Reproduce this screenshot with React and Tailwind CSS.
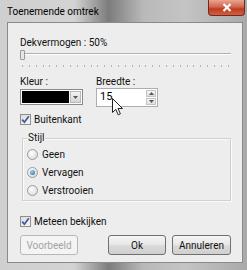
const font = { fontFamily: 'Roboto, "Noto Sans", sans-serif' };

const CheckBox = ({ label }) => (
    <div className="flex items-center gap-[3px] h-[13px]">
        <span className="w-[11px] h-[11px] border border-[#8e8f8f] bg-[linear-gradient(135deg,#dcdcdc,#f6f6f6)] flex items-center justify-center">
            <svg width="9" height="9" viewBox="0 0 9 9">
                <path d="M1.2 4.6 L3.4 7.2 L7.8 1.2" fill="none" stroke="#3a5a9a" strokeWidth="1.7" />
            </svg>
        </span>
        <span className="text-[10px] leading-[13px] text-[#111]">{label}</span>
    </div>
);

const Radio = ({ label, checked }) => (
    <div className="flex items-center gap-[4px] h-[13px] pl-[4px]">
        <span className="w-[11px] h-[11px] rounded-full border border-[#9c9c9c] bg-[radial-gradient(circle_at_40%_35%,#ffffff,#d4d4d4)] flex items-center justify-center">
            {checked && <span className="w-[5px] h-[5px] rounded-full bg-[radial-gradient(circle_at_40%_35%,#9fd3f5,#1b5f97)]" />}
        </span>
        <span className="text-[10px] leading-[13px] text-[#111]">{label}</span>
    </div>
);

const Button = ({ children, disabled, className = '' }) => (
    <div
        className={`h-[20px] w-[58px] rounded-[3px] border flex items-center justify-center text-[10px] ${
            disabled
                ? 'border-[#b5b9bc] bg-[#f4f4f4] text-[#a3a3a3]'
                : 'border-[#707070] bg-[linear-gradient(180deg,#f4f4f4_0%,#e8e8e8_48%,#dbdbdb_52%,#cfcfcf_100%)] text-[#111]'
        } ${className}`}
    >
        {children}
    </div>
);

const App = () => {
    const ticks = Array.from({ length: 31 });
    return (
        <div
            style={font}
            className="relative w-[247px] h-[270px] flex flex-col bg-[linear-gradient(90deg,#cfcfcf_0%,#d3d3d3_30%,#7c7c7c_44%,#b9b9b9_58%,#c4c4c4_75%,#a9a9a9_100%)] overflow-hidden"
        >
            <div className="h-[22px] flex items-start justify-between pl-[7px]">
                <span className="text-[10px] leading-[23px] text-black">Toenemende omtrek</span>
                <div className="mr-[2px] w-[37px] h-[16px] rounded-b-[4px] border border-[#6b2b22] border-t-0 bg-[linear-gradient(180deg,#e9a592_0%,#d2674f_45%,#bf3b22_60%,#d2603c_100%)] flex items-center justify-center">
                    <svg width="10" height="9" viewBox="0 0 10 9">
                        <path d="M1.5 1 L8.5 8 M8.5 1 L1.5 8" stroke="#fff" strokeWidth="2.2" />
                    </svg>
                </div>
            </div>

            <div className="flex-1 ml-[7px] mr-[4px] mb-[7px] border border-[#8a8a8a] bg-[#ededed] pl-[12px] pr-[11px] pt-[14px] flex flex-col">
                <div className="text-[10px] leading-[12px] text-[#111]">Dekvermogen : 50%</div>

                <div className="relative h-[12px] mt-[1px]">
                    <div className="absolute left-0 right-0 top-[3px] h-[2px] border-t border-[#b0b0b0] border-b border-b-white" />
                    <div className="absolute left-0 top-0 w-[5px] h-[10px] border border-[#9a9a9a] bg-[#e6e6e6] rounded-[1px]" />
                </div>
                <div className="mt-[3px] h-[2px] flex justify-between px-[2px]">
                    {ticks.map((_, i) => (
                        <span key={i} className="w-[1px] h-[2px] bg-[#b4b4b4]" />
                    ))}
                </div>

                <div className="mt-[9px] flex text-[10px] leading-[12px] text-[#111]">
                    <span className="w-[76px]">Kleur :</span>
                    <span>Breedte :</span>
                </div>

                <div className="flex h-[19px]">
                    <div className="mt-[1px] w-[63px] h-[16px] border border-[#8a8a8a] bg-white flex p-[1px]">
                        <div className="flex-1 bg-black" />
                        <div className="w-[11px] ml-[1px] bg-[linear-gradient(180deg,#f3f3f3,#d6d6d6)] border border-[#b9b9b9] flex items-center justify-center">
                            <svg width="5" height="3" viewBox="0 0 5 3"><path d="M0 0 H5 L2.5 3 Z" fill="#555" /></svg>
                        </div>
                    </div>
                    <div className="ml-[13px] w-[62px] h-[19px] border border-[#abadb3] bg-white flex items-center">
                        <span className="pl-[3px] flex-1 text-[11px] text-black">15</span>
                        <div className="w-[10px] h-[15px] mr-[1px] flex flex-col gap-[1px]">
                            <div className="flex-1 border border-[#c4c4c4] bg-[linear-gradient(180deg,#f6f6f6,#dedede)] flex items-center justify-center">
                                <svg width="5" height="3" viewBox="0 0 5 3"><path d="M0 3 H5 L2.5 0 Z" fill="#555" /></svg>
                            </div>
                            <div className="flex-1 border border-[#c4c4c4] bg-[linear-gradient(180deg,#f6f6f6,#dedede)] flex items-center justify-center">
                                <svg width="5" height="3" viewBox="0 0 5 3"><path d="M0 0 H5 L2.5 3 Z" fill="#555" /></svg>
                            </div>
                        </div>
                    </div>
                </div>

                <div className="mt-[6px]">
                    <CheckBox label="Buitenkant" />
                </div>

                <fieldset className="mt-[6px] ml-[2px] border border-[#cdd1d4] shadow-[inset_1px_1px_0_#fafafa,1px_1px_0_#fafafa] pl-[0px] pb-[3px] flex flex-col">
                    <legend className="ml-[4px] px-[1px] text-[10px] leading-[12px] text-[#111]">Stijl</legend>
                    <div className="mt-[4px] flex flex-col gap-[5px]">
                        <Radio label="Geen" />
                        <Radio label="Vervagen" checked />
                        <Radio label="Verstrooien" />
                    </div>
                </fieldset>

                <div className="mt-[14px]">
                    <CheckBox label="Meteen bekijken" />
                </div>

                <div className="mt-[7px] flex">
                    <Button disabled>Voorbeeld</Button>
                    <div className="ml-auto flex gap-[6px]">
                        <Button>Ok</Button>
                        <Button className="w-[59px]">Annuleren</Button>
                    </div>
                </div>
            </div>

            <svg className="absolute left-[112px] top-[98px]" width="12" height="18" viewBox="0 0 12 18">
                <path d="M0.5 0.5 L0.5 14.5 L3.8 11.3 L6.2 16.8 L8.4 15.9 L6 10.5 L10.5 10.5 Z" fill="#fff" stroke="#222" strokeWidth="1" strokeLinejoin="round" />
            </svg>
        </div>
    );
};

export default App;
